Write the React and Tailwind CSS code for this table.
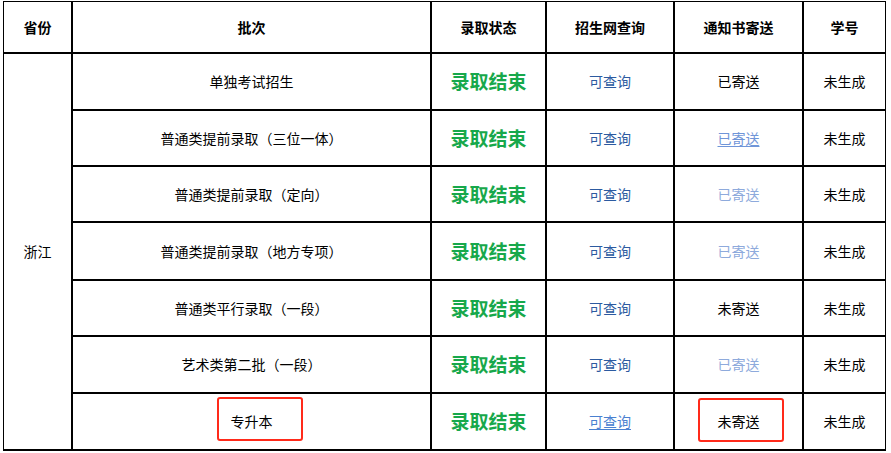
import React from 'react';

const rows = [
  { batch: '单独考试招生', query: 'normal', mail: '已寄送', mailStyle: 'plain' },
  { batch: '普通类提前录取（三位一体）', query: 'normal', mail: '已寄送', mailStyle: 'link' },
  { batch: '普通类提前录取（定向）', query: 'normal', mail: '已寄送', mailStyle: 'faded' },
  { batch: '普通类提前录取（地方专项）', query: 'normal', mail: '已寄送', mailStyle: 'faded' },
  { batch: '普通类平行录取（一段）', query: 'normal', mail: '未寄送', mailStyle: 'plain' },
  { batch: '艺术类第二批（一段）', query: 'normal', mail: '已寄送', mailStyle: 'faded' },
  { batch: '专升本', query: 'link', mail: '未寄送', mailStyle: 'plain' },
];

const headers = ['省份', '批次', '录取状态', '招生网查询', '通知书寄送', '学号'];

const mailClass = (style) => {
  switch (style) {
    case 'link': return 'text-[#6f95d8] underline underline-offset-2';
    case 'faded': return 'text-[#8eaadc]';
    default: return 'text-black';
  }
};

export default function App() {
  return (
    <div
      className="w-[891px] h-[453px] bg-white overflow-hidden pt-[1px] pl-[3px]"
      style={{ fontFamily: '"Noto Sans CJK SC", "Noto Sans", sans-serif' }}
    >
      <div className="relative w-[883px] grid grid-cols-[67px_357px_113px_126px_127px_81px] grid-rows-[50px_55px_54px_54px_56px_54px_55px_55px] gap-[2px] bg-black p-[1px] pb-[2px]">
        {/* Header */}
        {headers.map((h) => (
          <div key={h} className="bg-white flex items-center justify-center text-[14px] font-bold text-black">
            {h}
          </div>
        ))}

        {/* Province cell spanning all rows */}
        <div className="bg-white row-span-7 flex items-center justify-center text-[14px] text-black">
          浙江
        </div>

        {rows.map((r, i) => (
          <React.Fragment key={i}>
            <div className="bg-white flex items-center justify-center text-[14px] text-black">
              {r.batch}
            </div>
            <div className="bg-white flex items-center justify-center text-[19px] font-bold text-[#17a84b]">
              录取结束
            </div>
            <div className="bg-white flex items-center justify-center text-[14px]">
              {r.query === 'link' ? (
                <span className="text-[#4a80d0] underline underline-offset-2">可查询</span>
              ) : (
                <span className="text-[#2c5aa0]">可查询</span>
              )}
            </div>
            <div className="bg-white flex items-center justify-center text-[14px]">
              <span className={mailClass(r.mailStyle)}>{r.mail}</span>
            </div>
            <div className="bg-white flex items-center justify-center text-[14px] text-black">
              未生成
            </div>
          </React.Fragment>
        ))}

        {/* Red annotation boxes on the last row */}
        <div className="absolute left-[214px] top-[396px] w-[86px] h-[44px] border-2 border-[#ff2a1a] rounded-[3px]" />
        <div className="absolute left-[695px] top-[397px] w-[86px] h-[44px] border-2 border-[#ff2a1a] rounded-[3px]" />
      </div>
    </div>
  );
}
